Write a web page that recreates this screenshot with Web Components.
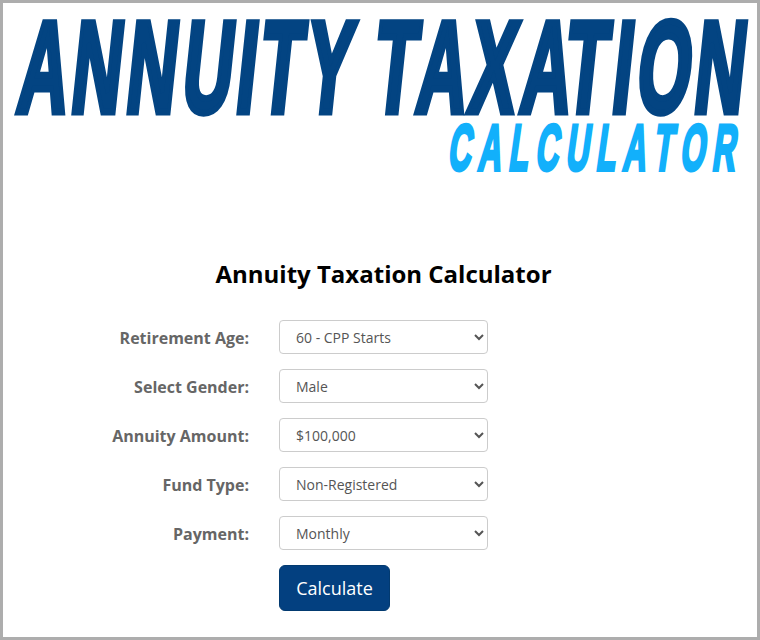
<!DOCTYPE html>
<html lang="en">
<head>
<meta charset="utf-8">
<title>Annuity Taxation Calculator</title>
<style>
  html, body { margin: 0; height: 100%; background: #fff; }
  body { box-sizing: border-box; height: 640px; overflow: hidden; font-family: "Open Sans", sans-serif; }
</style>
</head>
<body>
<calc-page>
  <calc-logo></calc-logo>
  <calc-form title="Annuity Taxation Calculator">
    <calc-field label="Retirement Age:" options="60 - CPP Starts|61|62|63|64|65"></calc-field>
    <calc-field label="Select Gender:" options="Male|Female"></calc-field>
    <calc-field label="Annuity Amount:" options="$100,000|$200,000|$300,000"></calc-field>
    <calc-field label="Fund Type:" options="Non-Registered|Registered"></calc-field>
    <calc-field label="Payment:" options="Monthly|Quarterly|Annually"></calc-field>
    <calc-button>Calculate</calc-button>
  </calc-form>
</calc-page>

<script>
class CalcPage extends HTMLElement {
  constructor() {
    super();
    this.attachShadow({ mode: "open" });
  }

  connectedCallback() {
    this.shadowRoot.innerHTML = /* html */`
    <style>
      :host {
        display: block;
        box-sizing: border-box;
        height: 640px;
        border: 3px solid #adadad;
        background: #fff;
      }
    </style>
    <slot></slot>
    `;
  }
}

class CalcLogo extends HTMLElement {
  constructor() {
    super();
    this.attachShadow({ mode: "open" });
  }

  connectedCallback() {
    this.shadowRoot.innerHTML = /* html */`
    <style>
      :host {
        display: block;
        height: 181px;
      }
      svg {
        display: block;
      }
      text {
        font-family: "Liberation Sans", Arial, sans-serif;
        font-weight: bold;
        font-kerning: none;
        vector-effect: non-scaling-stroke;
      }
      .big {
        fill: #034482;
        stroke: #034482;
        stroke-width: 5.5px;
        font-size: 130px;
      }
      .small {
        fill: #12b0fb;
        stroke: #12b0fb;
        stroke-width: 3px;
        font-size: 65px;
        letter-spacing: 15px;
      }
    </style>
    <svg width="754" height="181" viewBox="0 0 754 181">
      <!-- letters are placed one by one, the logo has its own tight spacing -->
      <text class="big" transform="translate(-1 108.5) skewX(-6) scale(.53 1)" x="25 125.9 229.7 335.4 437.3 480.9 567.3">ANNUITY</text>
      <text class="big" transform="translate(-1 108.5) skewX(-6) scale(.53 1)" x="696 777.8 876.7 974.1 1056.3 1146.7 1193.1 1301.4">TAXATION</text>
      <text class="small" transform="translate(444 167) skewX(-8) scale(.49 1)">CALCULATOR</text>
    </svg>
    `;
  }
}

class CalcForm extends HTMLElement {
  constructor() {
    super();
    this.attachShadow({ mode: "open" });
  }

  connectedCallback() {
    this.shadowRoot.innerHTML = /* html */`
    <style>
      :host {
        display: block;
        padding-top: 73px;
      }
      h2 {
        margin: 0 0 30px;
        font: 700 24px/33px "Open Sans", sans-serif;
        color: #000;
        text-align: center;
        padding-left: 7px;
      }
      .rows {
        display: flex;
        flex-direction: column;
        gap: 15px;
      }
    </style>
    <h2>${this.getAttribute("title")}</h2>
    <div class="rows"><slot></slot></div>
    `;
  }
}

class CalcField extends HTMLElement {
  constructor() {
    super();
    this.attachShadow({ mode: "open" });
  }

  connectedCallback() {
    const options = this.getAttribute("options").split("|");
    this.shadowRoot.innerHTML = /* html */`
    <style>
      :host {
        display: grid;
        grid-template-columns: 246px 209px;
        column-gap: 30px;
        align-items: center;
      }
      label {
        font: 700 16px/22px "Open Sans", sans-serif;
        color: #666;
        text-align: right;
        padding-top: 2px;
      }
      select {
        box-sizing: border-box;
        width: 209px;
        height: 34px;
        padding: 0 0 0 12px;
        border: 1px solid #ccc;
        border-radius: 4px;
        background: #fff;
        font: 400 14px "Open Sans", sans-serif;
        color: #555;
      }
    </style>
    <label>${this.getAttribute("label")}</label>
    <select>${options.map((o) => `<option>${o}</option>`).join("")}</select>
    `;
  }
}

class CalcButton extends HTMLElement {
  constructor() {
    super();
    this.attachShadow({ mode: "open" });
  }

  connectedCallback() {
    this.shadowRoot.innerHTML = /* html */`
    <style>
      :host {
        display: block;
        padding-left: 276px;
      }
      button {
        box-sizing: border-box;
        width: 111px;
        height: 46px;
        padding: 0;
        border: 1px solid #023a70;
        border-radius: 6px;
        background: #034080;
        color: #fff;
        font: 400 18px "Open Sans", sans-serif;
      }
    </style>
    <button type="button"><slot></slot></button>
    `;
  }
}

customElements.define("calc-page", CalcPage);
customElements.define("calc-logo", CalcLogo);
customElements.define("calc-form", CalcForm);
customElements.define("calc-field", CalcField);
customElements.define("calc-button", CalcButton);
</script>
</body>
</html>
